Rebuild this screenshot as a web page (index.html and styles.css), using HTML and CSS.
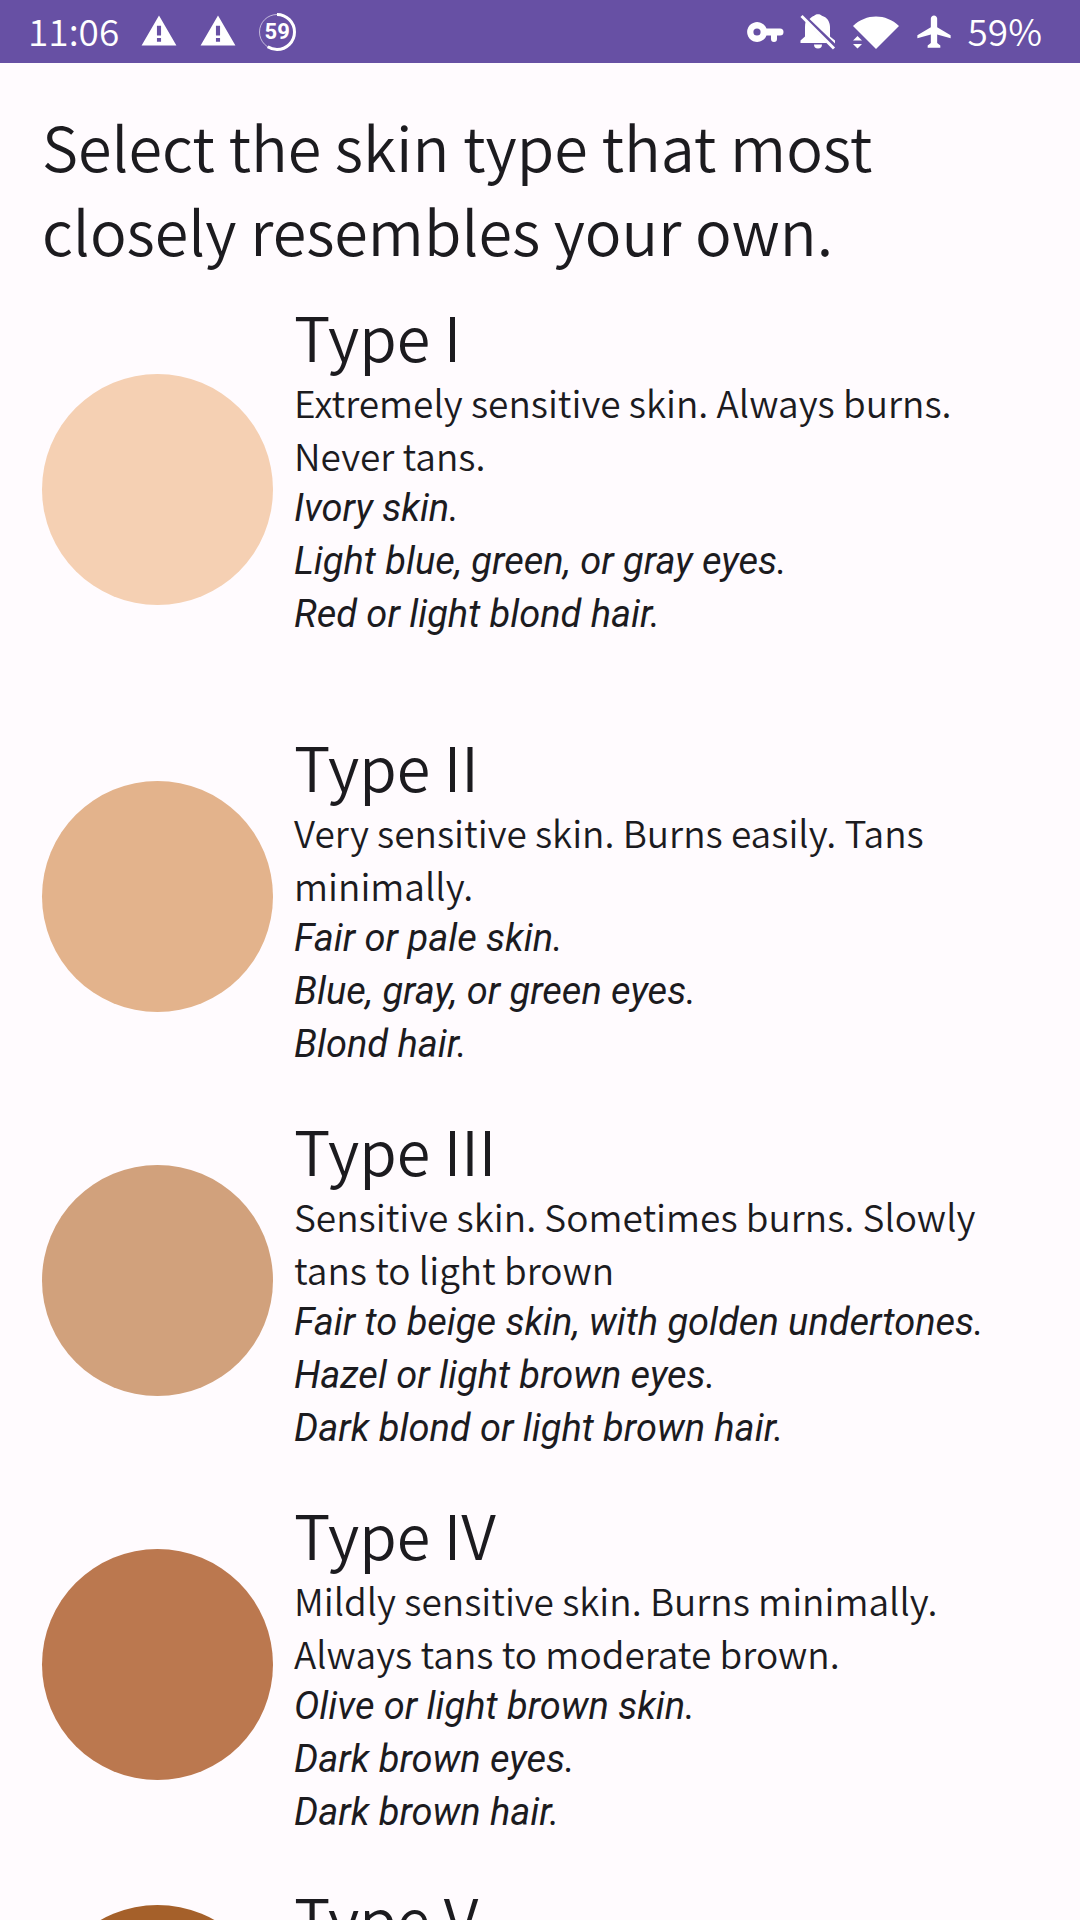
FILE: index.html
```html
<!DOCTYPE html>
<html lang="en">
<head>
<meta charset="utf-8">
<meta name="viewport" content="width=device-width, initial-scale=1">
<title>Skin type</title>
<link rel="stylesheet" href="styles.css">
</head>
<body>
<div class="app">
  <header class="status">
    <div class="status-side">
      <span class="status-text">11:06</span>
      <svg class="icon" viewBox="0 0 24 24" aria-hidden="true"><path d="M1 20.500h22L12 1.500 1 20.500zm12.300-2.300h-2.600v-2.400h2.600zm0-4h-2.600V8h2.600z"/></svg>
      <svg class="icon" viewBox="0 0 24 24" aria-hidden="true"><path d="M1 20.500h22L12 1.500 1 20.500zm12.300-2.300h-2.600v-2.400h2.600zm0-4h-2.600V8h2.600z"/></svg>
      <span class="ring">
        <svg class="ring-arc" viewBox="0 0 38 38" aria-hidden="true">
          <circle class="ring-track" cx="19" cy="19" r="17.500"/>
          <circle class="ring-value" cx="19" cy="19" r="17.500" pathLength="100" stroke-dasharray="59 100" transform="rotate(-90 19 19)"/>
        </svg>
        <span class="ring-text">59</span>
      </span>
    </div>
    <div class="status-side status-system">
      <svg class="icon" viewBox="0 0 38 38" aria-hidden="true"><path fill-rule="evenodd" d="M20.500 15.500A10 10 0 1 0 20.500 22.500H25v3.500a2.500 2.500 0 0 0 6 0v-3.500h3a3 3 0 0 0 0-7zM11 15.400a3.600 3.600 0 1 1 0 7.200 3.600 3.600 0 0 1 0-7.200z"/></svg>
      <svg class="icon" viewBox="0 0 38 38" aria-hidden="true"><path d="M10.500 6C12 4.500 13.500 3.200 15.200 2.700 16 .6 22 .6 22.800 2.700 28 4 31 8.500 31 14v9.500l5 4V30.500z M6.800 8.300 28 30H1.500v-2.500L6 23.500V14c0-2 .2-4 .8-5.700z M15 31.500h8a4 4 0 0 1-8 0z"/><path class="slash" d="M2.500 3 35 35.500"/></svg>
      <svg class="icon-wide" viewBox="0 0 48 38" aria-hidden="true"><path d="M1 13C14 .3 34 .3 47 13L24 36zM1 27.500h9L5.500 23zM1 31h9l-4.500 4.500z"/></svg>
      <svg class="icon" viewBox="0 0 24 24" aria-hidden="true"><path d="M22.500 16v-2l-8.500-5V3.500C14 2.400 13.100 1.500 12 1.500S10 2.400 10 3.500V9l-8.500 5v2L10 13.500V19l-2 1.500V22h8v-1.500L14 19v-5.500z"/></svg>
      <span class="status-text">59%</span>
    </div>
  </header>
  <main class="content">
    <h1 class="heading">Select the skin type that most closely resembles your own.</h1>
    <ul class="types">
      <li class="type type-1">
        <span class="swatch"></span>
        <div class="details">
          <h2 class="name">Type I</h2>
          <p class="summary">Extremely sensitive skin. Always burns. Never tans.</p>
          <p class="traits">Ivory skin.<br>Light blue, green, or gray eyes.<br>Red or light blond hair.</p>
        </div>
      </li>
      <li class="type type-2">
        <span class="swatch"></span>
        <div class="details">
          <h2 class="name">Type II</h2>
          <p class="summary">Very sensitive skin. Burns easily. Tans minimally.</p>
          <p class="traits">Fair or pale skin.<br>Blue, gray, or green eyes.<br>Blond hair.</p>
        </div>
      </li>
      <li class="type type-3">
        <span class="swatch"></span>
        <div class="details">
          <h2 class="name">Type III</h2>
          <p class="summary">Sensitive skin. Sometimes burns. Slowly tans to light brown</p>
          <p class="traits">Fair to beige skin, with golden undertones.<br>Hazel or light brown eyes.<br>Dark blond or light brown hair.</p>
        </div>
      </li>
      <li class="type type-4">
        <span class="swatch"></span>
        <div class="details">
          <h2 class="name">Type IV</h2>
          <p class="summary">Mildly sensitive skin. Burns minimally. Always tans to moderate brown.</p>
          <p class="traits">Olive or light brown skin.<br>Dark brown eyes.<br>Dark brown hair.</p>
        </div>
      </li>
      <li class="type type-5">
        <span class="swatch"></span>
        <div class="details">
          <h2 class="name">Type V</h2>
        </div>
      </li>
    </ul>
  </main>
</div>
</body>
</html>
```
FILE: styles.css
```css
* {
  box-sizing: border-box;
}

body,
h1,
h2,
p,
ul {
  margin: 0;
  padding: 0;
}

body {
  background: #fffbfe;
  color: #1c1b1f;
  font-family: "Noto Sans CJK SC", "Noto Sans", sans-serif;
}

.app {
  display: flex;
  flex-direction: column;
  height: 100vh;
}

.status {
  display: flex;
  flex: none;
  align-items: center;
  justify-content: space-between;
  padding: 0 38px 0 28px;
  height: 63px;
  background: #6750a4;
  color: #fff;
}

.status-side {
  display: flex;
  align-items: center;
  gap: 21px;
}

.status-system {
  gap: 15px;
}

.status-text {
  padding-bottom: 3px;
  font-size: 37px;
  font-weight: 350;
  line-height: 60px;
}

.icon {
  width: 38px;
  height: 38px;
  fill: #fff;
}

.icon-wide {
  width: 48px;
  height: 38px;
  fill: #fff;
}

.slash {
  fill: none;
  stroke: #fff;
  stroke-width: 3;
}

.ring {
  display: grid;
  place-items: center;
}

.ring-arc,
.ring-text {
  grid-area: 1 / 1;
}

.ring-arc {
  width: 38px;
  height: 38px;
  fill: none;
  stroke: #fff;
}

.ring-track {
  stroke-width: 1;
  opacity: 0.6;
}

.ring-value {
  stroke-width: 3;
}

.ring-text {
  font: 700 22px/38px Roboto, sans-serif;
}

.content {
  flex: 1;
  min-height: 0;
  padding: 41px 42px;
  overflow-y: auto;
  scrollbar-width: none;
}

.heading,
.name {
  font-size: 61px;
  font-weight: 350;
  line-height: 84px;
}

.name {
  padding-top: 4px;
  line-height: 81px;
}

.types {
  display: flex;
  flex-direction: column;
  gap: 34px;
  margin-top: 19px;
  list-style: none;
}

.type {
  display: flex;
  align-items: center;
  gap: 21px;
}

.swatch {
  flex: none;
  width: 231px;
  height: 231px;
  border-radius: 50%;
}

.details {
  flex: 1;
  align-self: flex-start;
}

.summary,
.traits {
  line-height: 53px;
}

.summary {
  font-size: 37px;
  font-weight: 350;
}

.traits {
  font-family: Roboto, sans-serif;
  font-size: 38px;
  font-style: italic;
}

.type-1 {
  min-height: 396px;
}

.type-5 {
  min-height: 294px;
}

.type-1 .swatch {
  background: #f5d0b3;
}

.type-2 .swatch {
  background: #e3b38c;
}

.type-3 .swatch {
  background: #d1a17c;
}

.type-4 .swatch {
  background: #bb784f;
}

.type-5 .swatch {
  background: #a5602a;
}
```
